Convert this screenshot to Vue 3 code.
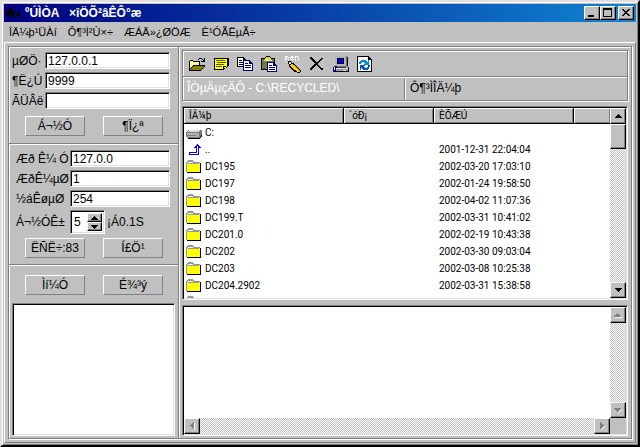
<script setup>
import { ref } from 'vue'

const title = 'ºÚÌÒA   ×îÖÕ²âÊÔ°æ'
const menus = ['ÎÄ¼þ¹ÜÀí', 'Ô¶³Ì²Ù×÷', 'ÆÁÄ»¿ØÖÆ', 'Ê¹ÓÃËµÃ÷']
const tools = ['open', 'view', 'copy', 'paste', 'rename', 'delete', 'computer', 'refresh']
const address = ref('127.0.0.1')
const port = ref('9999')
const password = ref('')
const subnet = ref('127.0.0')
const first = ref('1')
const last = ref('254')
const timeout = ref('5')
const files = [
  { icon: 'drive', name: 'C:', date: '' },
  { icon: 'up', name: '..', date: '2001-12-31 22:04:04' },
  { icon: 'folder', name: 'DC195', date: '2002-03-20 17:03:10' },
  { icon: 'folder', name: 'DC197', date: '2002-01-24 19:58:50' },
  { icon: 'folder', name: 'DC198', date: '2002-04-02 11:07:36' },
  { icon: 'folder', name: 'DC199.T', date: '2002-03-31 10:41:02' },
  { icon: 'folder', name: 'DC201.0', date: '2002-02-19 10:43:38' },
  { icon: 'folder', name: 'DC202', date: '2002-03-30 09:03:04' },
  { icon: 'folder', name: 'DC203', date: '2002-03-08 10:25:38' },
  { icon: 'folder', name: 'DC204.2902', date: '2002-03-31 15:38:58' },
  { icon: 'folder', name: '', date: '' }
]
</script>

<template>
  <main class="window">
    <header class="titlebar">
      <svg class="app-icon" viewBox="0 0 16 14" shape-rendering="crispEdges">
        <path d="M4 1h1v1h1v2h1v1h1v1h1v3h-1v1h-2v-1h-1v2h1v1H3v-1h1V9H3v1H1V9H0V6h1V5h1V4h1V2h1z" />
        <path d="M12 4h1v2h1v2h1v3h1v1h-2v-2h-3v2H9v-1h1V9h1V6h1zM12 7v2h1V7z" fill-rule="evenodd" />
      </svg>
      <h1>{{ title }}</h1>
      <div class="caption">
        <button aria-label="Minimize"><svg viewBox="0 0 12 10" shape-rendering="crispEdges"><path d="M2 7h6v2H2z" /></svg></button>
        <button aria-label="Maximize"><svg viewBox="0 0 12 10" shape-rendering="crispEdges"><path d="M1 0h9v9H1zM2 2v6h7V2z" fill-rule="evenodd" /></svg></button>
        <button class="close" aria-label="Close"><svg viewBox="0 0 12 10" shape-rendering="crispEdges"><path d="M2 1h2v1h1v1h2V2h1V1h2v1H9v1H8v1H7v1h1v1h1v1h1v1H8V7H7V6H5v1H4v1H2V7h1V6h1V5h1V4H4V3H3V2H2z" /></svg></button>
      </div>
    </header>

    <nav class="menu">
      <button v-for="m in menus" :key="m">{{ m }}</button>
    </nav>

    <div class="client">
      <div class="frame">
        <aside class="side">
          <section class="group connect">
            <div class="field"><label for="address">µØÖ·</label><input id="address" v-model="address" class="sunken" /></div>
            <div class="field"><label for="port">¶Ë¿Ú</label><input id="port" v-model="port" class="sunken" /></div>
            <div class="field"><label for="password">ÃÜÂë</label><input id="password" v-model="password" class="sunken" /></div>
            <div class="pair"><button class="btn">Á¬½Ó</button><button class="btn">¶Ï¿ª</button></div>
          </section>
          <section class="group scan">
            <div class="field"><label for="subnet">Æð Ê¼ Ó</label><input id="subnet" v-model="subnet" class="sunken" /></div>
            <div class="field"><label for="first">ÆðÊ¼µØ</label><input id="first" v-model="first" class="sunken" /></div>
            <div class="field"><label for="last">½áÊøµØ</label><input id="last" v-model="last" class="sunken" /></div>
            <div class="field tall">
              <label for="timeout">Á¬½ÓÊ±</label>
              <div class="spin-row">
                <div class="spinner sunken">
                  <input id="timeout" v-model="timeout" />
                  <div class="steps">
                    <button aria-label="Increase"><svg viewBox="0 0 7 4" shape-rendering="crispEdges"><path d="M3 0h1v1h1v1h1v1h1v1H0V3h1V2h1V1h1z" /></svg></button>
                    <button aria-label="Decrease"><svg viewBox="0 0 7 4" shape-rendering="crispEdges"><path d="M0 0h7v1H6v1H5v1H4v1H3V3H2V2H1V1H0z" /></svg></button>
                  </div>
                </div>
                <span>¡Á0.1S</span>
              </div>
            </div>
            <div class="pair"><button class="btn">ËÑË÷:83</button><button class="btn">Í£Ö¹</button></div>
          </section>
          <section class="group hosts">
            <div class="pair"><button class="btn">Ìí¼Ó</button><button class="btn">É¾³ý</button></div>
            <div class="hostlist sunken"></div>
          </section>
        </aside>

        <section class="content">
          <div class="top">
            <div class="toolbar">
              <button v-for="t in tools" :key="t" :aria-label="t">
                <svg viewBox="0 0 16 18" shape-rendering="crispEdges">
                  <g v-if="t === 'open'">
                    <path d="M9 4h1V3h3v1h1v1h1V3h1v4h-4V6h2V5h-1V4h-3v1H9z" fill="#000" />
                    <path d="M1 6h3v1h7v3H5v1H4v1H3v1H2v1H1z" fill="#ffff9c" />
                    <path d="M1 5h3v1h7v4h-1V7H4V6H1v9H0V6h1z" />
                    <path d="M5 10h11v1h-1v1h-1v1h-1v1h-1v1H1v-1h1v-1h1v-1h1v-1h1z" fill="#848400" />
                    <path d="M4 10h12v1H4zM2 12h1v-1h1v1H3v1H2v1H1v-1h1zM15 11h1v1h-1v1h-1v1h-1v1h-1v1H0v-1h12v-1h1v-1h1v-1h1z" />
                  </g>
                  <g v-else-if="t === 'view'">
                    <path d="M1 3h15v8h-1v1h-1v1h-2v1h-1v1H1z" />
                    <path d="M2 4h12v7h-4v3H2z" fill="#ffff00" />
                    <path d="M11 12h2v-1h1v1h-1v1h-2z" fill="#ffff00" />
                    <path d="M3 5h9v1H3zM4 7h9v1H4zM3 9h8v1H3zM3 11h6v1H3z" fill="#555500" />
                  </g>
                  <g v-else-if="t === 'copy'">
                    <path d="M0 2h7v1h1v1h1v8H0z" />
                    <path d="M1 3h5v2h2v6H1z" fill="#fff" />
                    <path d="M2 5h3v1H2zM2 7h5v1H2zM2 9h5v1H2z" />
                    <path d="M6 5h7v1h1v1h1v1h1v8H6z" fill="#000084" />
                    <path d="M7 6h5v3h3v6H7z" fill="#fff" />
                    <path d="M8 8h3v1H8zM8 10h6v1H8zM8 12h6v1H8z" fill="#000084" />
                  </g>
                  <g v-else-if="t === 'paste'">
                    <path d="M0 3h4V2h1V1h4v1h1v1h4v12H0z" />
                    <path d="M1 4h12v10H1z" fill="#77773c" />
                    <path d="M5 2h4v1h1v2H4V3h1z" fill="#e0e050" />
                    <path d="M3 5h8v1H3z" fill="#ddd" />
                    <path d="M6 7h7v1h1v1h1v1h1v7H6z" fill="#000084" />
                    <path d="M7 8h5v3h3v5H7z" fill="#fff" />
                    <path d="M8 10h3v1H8zM8 12h6v1H8zM8 14h6v1H8z" fill="#000084" />
                  </g>
                  <g v-else-if="t === 'rename'">
                    <path d="M0 1h3v1h1v1H3v1h1v2H3V4H1v2H0zM1 2v1h2V2zM6 1h2v1h1v1H6v1h3v1H6V4H5V2h1zM10 1h3v1h1v4h-1V2h-2v4h-1z" fill="#fff" />
                    <path d="M3 6h3v1h1v1h2v1h1v1h1v1h1v1h1v1h1v1h1v1h1v2h-1v1h-3v-1H9v-1H8v-1H7v-1H6v-1H5v-1H4V9H3z" />
                    <path d="M4 7h2v2H4z" fill="#ddd" />
                    <path d="M6 9h2v1h1v1h1v1h1v1h1v1h1v1h1v1h1v1h-3v-1h-1v-1H9v-1H8v-1H7v-1H6v-1H5v-1h1z" fill="#ffd700" />
                    <path d="M9 10h1v1h1v1h1v1h1v1h1v1h1v1h-1v-1h-1v-1h-1v-1h-1v-1h-1v-1H9z" fill="#a88600" />
                  </g>
                  <path v-else-if="t === 'delete'" d="M1 2h2v1h1v1h1v1h1v1h1v1h2V6h1V5h1V4h1V3h2v1h-1v1h-1v1h-1v1h-1v1H9v2h1v1h1v1h1v1h2v2h-2v-1h-1v-1h-1v-1H9v-1H8v-1H7v1H6v1H5v1H4v1H3v1H1v-2h1v-1h1v-1h1v-1h1V9h1V8H5V7H4V6H3V5H2V4H1z" />
                  <g v-else-if="t === 'computer'">
                    <path d="M2 1h11l2 1v9l-1 1H2z" fill="#777" />
                    <path d="M2 1h11v10H2z" fill="#b4b4b4" />
                    <path d="M4 3h7v6H4z" fill="#000" />
                    <path d="M5 4h5v4H5z" fill="#0000ff" />
                    <path d="M4 12h9v1H4z" fill="#333" />
                    <path d="M3 13h12v3H3z" fill="#999" />
                    <path d="M3 13h12v1H3zM10 15h3v1h-3z" fill="#ddd" />
                    <path d="M15 12h1v5H5v-1h10zM14 2h1v9h-1z" />
                    <path d="M1 11h3v2H3v3h3v1H0v-5h1z" fill="#000084" />
                    <path d="M1 12h1v3H1z" fill="#fff" />
                  </g>
                  <g v-else>
                    <path d="M0 1h12v1h1v1h1v1h1v13H0z" />
                    <path d="M1 2h10v3h3v11H1z" fill="#fff" />
                    <path d="M4 5h5v1h1v1h1V5h1v5H7V9h1V8H7V7H5v1H4v1H2V7h1V6h1z" fill="#008bd6" />
                    <path d="M3 10h5v1H7v1h1v1h2v-1h1v-2h2v2h-1v2h-1v1H6v-1H5v-1H4v2H3z" fill="#0052c6" />
                  </g>
                </svg>
              </button>
            </div>
            <div class="paths">
              <span class="local">ÎÒµÄµçÄÔ - C:\RECYCLED\</span>
              <span class="remote">Ô¶³ÌÎÄ¼þ</span>
            </div>
          </div>

          <div class="listview sunken">
            <div class="table-wrap">
              <table>
                <colgroup><col class="c-name" /><col class="c-size" /><col class="c-date" /><col /></colgroup>
                <thead><tr><th>ÎÄ¼þ</th><th>´óÐ¡</th><th>ÈÕÆÚ</th><th></th></tr></thead>
                <tbody>
                  <tr v-for="(f, i) in files" :key="i">
                    <td>
                      <div class="entry">
                        <svg viewBox="0 0 16 14" shape-rendering="crispEdges">
                          <g v-if="f.icon === 'folder'">
                            <path d="M1 3h13v9H1z" fill="#ffff00" />
                            <path d="M2 1h5v1H2z" fill="#ffff00" />
                            <path d="M2 0h5v1h1v1h6v1h-1v1H2V3h5V2H2v1H1v9H0V2h1V1h1z" fill="#969696" />
                            <path d="M14 3h1v10H1v-1h13z" />
                          </g>
                          <g v-else-if="f.icon === 'drive'">
                            <path d="M3 4h12l1 1v5l-2 3H2l-2-2V6z" fill="#777" />
                            <path d="M3 4h11l-1 2H1z" fill="#ddd" />
                            <path d="M1 7h12v4H1z" fill="#b4b4b4" />
                            <path d="M1 9h9v1H1z" fill="#777" />
                            <path d="M11 8h1v1h-1z" fill="#00e000" />
                            <path d="M2 12h12v-1h1V9h1v2h-1v1h-1v1H2z" />
                          </g>
                          <path v-else d="M11 1h1v1h1v1h1v1h1v1h-2v7H3V9h7V5H8V4h1V3h1V2h1zM11 3v7H4v1h8V3z" fill="#0000ee" fill-rule="evenodd" />
                        </svg>
                        <span>{{ f.name }}</span>
                      </div>
                    </td>
                    <td></td>
                    <td>{{ f.date }}</td>
                    <td></td>
                  </tr>
                </tbody>
              </table>
            </div>
            <div class="track vertical">
              <button class="arrow" aria-label="Scroll up"><svg viewBox="0 0 7 4" shape-rendering="crispEdges"><path d="M3 0h1v1h1v1h1v1h1v1H0V3h1V2h1V1h1z" /></svg></button>
              <div class="thumb"></div>
              <button class="arrow end" aria-label="Scroll down"><svg viewBox="0 0 7 4" shape-rendering="crispEdges"><path d="M0 0h7v1H6v1H5v1H4v1H3V3H2V2H1V1H0z" /></svg></button>
            </div>
          </div>

          <div class="log sunken">
            <div class="log-text"></div>
            <div class="track vertical">
              <button class="arrow" disabled aria-label="Log up"><svg viewBox="0 0 8 5" shape-rendering="crispEdges"><path d="M1 4h7v1H1z" fill="#fff" /><path d="M3 0h1v1h1v1h1v1h1v1H0V3h1V2h1V1h1z" fill="#808080" /></svg></button>
              <button class="arrow end" disabled aria-label="Log down"><svg viewBox="0 0 8 5" shape-rendering="crispEdges"><path d="M7 1h1v1H7v1H6v1H5v1H4V4h1V3h1V2h1z" fill="#fff" /><path d="M0 0h7v1H6v1H5v1H4v1H3V3H2V2H1V1H0z" fill="#808080" /></svg></button>
            </div>
            <div class="track horizontal">
              <button class="arrow" disabled aria-label="Log left"><svg class="side-arrow" viewBox="0 0 5 8" shape-rendering="crispEdges"><path d="M4 1h1v7H4z" fill="#fff" /><path d="M3 0h1v7H3V6H2V5H1V4H0V3h1V2h1V1h1z" fill="#808080" /></svg></button>
              <button class="arrow end" disabled aria-label="Log right"><svg class="side-arrow" viewBox="0 0 5 8" shape-rendering="crispEdges"><path d="M4 4h1v1H4v1H3v1H2v1H1V7h1V6h1V5h1z" fill="#fff" /><path d="M0 0h1v1h1v1h1v1h1v1H3v1H2v1H1v1H0z" fill="#808080" /></svg></button>
            </div>
            <div class="corner"></div>
          </div>
        </section>
      </div>
    </div>
  </main>
</template>

<style>
html, body { margin: 0; background: #c0c0c0; }
</style>

<style scoped>
* { box-sizing: border-box; }
.window {
  display: flex;
  flex-direction: column;
  height: 100vh;
  padding: 2px;
  background: #c0c0c0;
  border: 2px solid;
  border-color: #dfdfdf #000 #000 #dfdfdf;
  box-shadow: inset 1px 1px #fff, inset -1px -1px #808080;
  font: 12px/14px "Liberation Sans", Arial, sans-serif;
  color: #000;
}
button, input { font: inherit; color: inherit; margin: 0; padding: 0; border: 0; border-radius: 0; outline: 0; }
button { background: #c0c0c0; }
svg { display: block; }
.titlebar {
  display: flex;
  align-items: center;
  height: 18px;
  flex: none;
  padding: 0 2px;
  background: linear-gradient(90deg, #000080, #1084d0);
}
.app-icon { width: 16px; height: 14px; margin-right: 3px; }
h1 { flex: 1; margin: 0; font-size: 12px; line-height: 16px; font-weight: bold; color: #fff; white-space: pre; }
.caption { display: flex; }
.caption button, .arrow, .steps button, .thumb {
  display: flex;
  align-items: center;
  justify-content: center;
  background: #c0c0c0;
  border: 1px solid;
  border-color: #fff #000 #000 #fff;
  box-shadow: inset -1px -1px #808080;
}
.caption button { width: 16px; height: 14px; }
.caption svg { width: 12px; height: 10px; }
.caption .close { margin-left: 2px; }
.menu { display: flex; gap: 11px; flex: none; height: 20px; padding: 0 5px; align-items: center; font-size: 11px; }
.client {
  display: flex;
  flex: 1;
  min-height: 0;
  padding: 3px;
  border: 1px solid;
  border-color: #fff #808080 #808080 #fff;
}
.frame {
  display: flex;
  flex: 1;
  min-width: 0;
  border: 1px solid #808080;
  box-shadow: inset 1px 1px #fff, 1px 1px #fff;
}
.side {
  display: flex;
  flex-direction: column;
  width: 170px;
  flex: none;
  border-right: 1px solid #808080;
  box-shadow: 1px 0 #fff;
}
.group { padding: 6px 8px 6px 3px; border-bottom: 1px solid #808080; box-shadow: 0 1px #fff; }
.field { display: grid; grid-template-columns: 33px 1fr; height: 16px; margin-bottom: 4px; align-items: center; }
.field label { white-space: nowrap; }
.field input { width: 100%; min-width: 0; height: 17px; padding: 0 2px; }
.sunken {
  background: #fff;
  border: 1px solid;
  border-color: #808080 #fff #fff #808080;
  box-shadow: inset 1px 1px #000, inset -1px -1px #dfdfdf;
}
.pair { display: flex; gap: 18px; padding-left: 13px; }
.btn {
  width: 60px;
  height: 20px;
  border: 1px solid;
  border-color: #fff #808080 #808080 #fff;
}
.connect { padding-top: 5px; padding-bottom: 7px; }
.connect .pair { padding-top: 4px; }
.scan .field { grid-template-columns: 54px 1fr; padding-left: 4px; }
.scan .field.tall { height: 24px; }
.spin-row { display: flex; align-items: center; gap: 2px; }
.spinner { display: flex; width: 35px; height: 24px; padding: 2px; }
.spinner input { flex: 1; height: 18px; padding: 0 1px; background: #fff; }
.steps { display: flex; flex-direction: column; width: 15px; flex: none; }
.steps button { height: 9px; }
.steps svg { width: 7px; height: 4px; }
.hosts { display: flex; flex-direction: column; flex: 1; gap: 8px; padding: 10px 3px 2px; border: 0; box-shadow: none; }
.hostlist { flex: 1; }
.content {
  display: grid;
  grid-template-rows: auto minmax(0, 194fr) minmax(0, 131fr);
  gap: 5px;
  flex: 1;
  min-width: 0;
  padding: 3px 3px 2px;
}
.top { border: 1px solid #808080; box-shadow: inset 1px 1px #fff, 1px 1px #fff; }
.toolbar { display: flex; height: 26px; align-items: center; padding-left: 2px; border-bottom: 1px solid #808080; }
.toolbar button { display: flex; justify-content: center; width: 24px; background: none; }
.toolbar svg { width: 16px; height: 18px; }
.paths { display: grid; grid-template-columns: 1fr 1fr; height: 23px; border-top: 1px solid #fff; }
.paths span { padding: 3px 4px; white-space: nowrap; overflow: hidden; }
.local { color: #fff; border-right: 1px solid #808080; }
.remote { border-left: 1px solid #fff; }
.listview { display: flex; padding: 1px; overflow: hidden; }
.table-wrap { flex: 1; min-width: 0; overflow: hidden; }
table { width: 100%; table-layout: fixed; border-collapse: separate; border-spacing: 0; font: 10px/15px Roboto, "Liberation Sans", sans-serif; }
.c-name { width: 160px; }
.c-size { width: 90px; }
.c-date { width: 140px; }
th {
  height: 16px;
  padding: 0 5px;
  background: #c0c0c0;
  border-right: 1px solid #000;
  border-bottom: 1px solid #000;
  box-shadow: inset 1px 1px #fff, inset -1px -1px #808080;
  text-align: left;
  font-weight: normal;
}
th:last-child { border-right: 0; }
td { height: 17px; padding: 0 5px; white-space: nowrap; }
td:first-child { padding: 0 2px; }
.entry { display: flex; align-items: center; gap: 3px; height: 17px; }
.entry svg { width: 16px; height: 14px; }
.track {
  display: flex;
  background: repeating-conic-gradient(#c0c0c0 0 25%, #fff 0 50%) 0 0 / 2px 2px;
}
.vertical { flex-direction: column; width: 16px; flex: none; }
.arrow { width: 16px; height: 16px; flex: none; }
.arrow svg { width: 7px; height: 4px; }
.arrow:disabled svg { width: 8px; height: 5px; }
.arrow:disabled .side-arrow { width: 5px; height: 8px; }
.thumb { height: 25px; }
.vertical .end { margin-top: auto; }
.horizontal .end { margin-left: auto; }
.log { display: grid; grid-template-columns: minmax(0, 1fr) 16px; grid-template-rows: minmax(0, 1fr) 16px; padding: 1px; }
.corner { background: #c0c0c0; }
</style>
